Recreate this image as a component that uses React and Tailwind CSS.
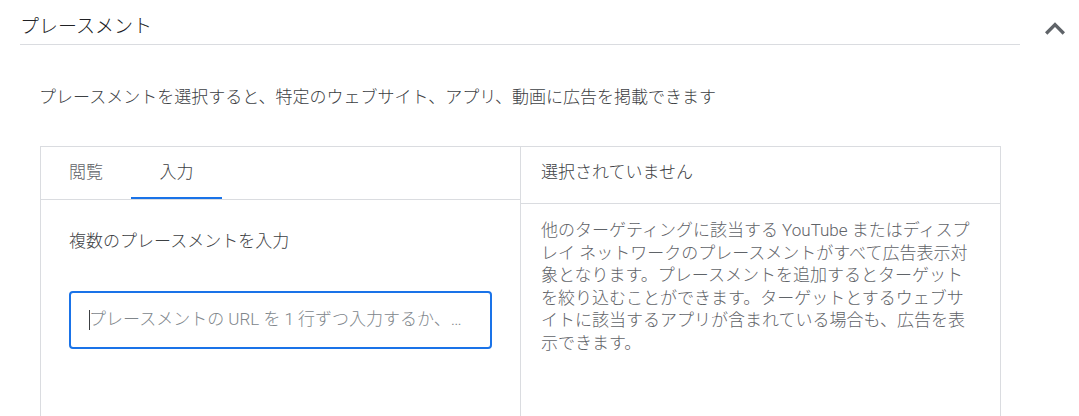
const font = { fontFamily: 'Roboto, "Noto Sans CJK JP", sans-serif' };

function ExpandLess() {
  return (
    <svg width="40" height="40" viewBox="0 0 24 24" className="block shrink-0 text-[#5f6368]">
      <path fill="currentColor" d="M12 8l-6 6 1.41 1.41L12 10.83l4.59 4.58L18 14z" />
    </svg>
  );
}

const helpLines = [
  '他のターゲティングに該当する YouTube またはディスプ',
  'レイ ネットワークのプレースメントがすべて広告表示対',
  '象となります。プレースメントを追加するとターゲット',
  'を絞り込むことができます。ターゲットとするウェブサ',
  'イトに該当するアプリが含まれている場合も、広告を表',
  '示できます。',
];

export default function App() {
  return (
    <div
      className="h-[416px] w-[1079px] overflow-hidden bg-white font-light text-[#3c4043]"
      style={font}
    >
      {/* section header */}
      <div className="flex h-[45px] items-start">
        <div className="ml-[20px] h-[45px] w-[1000px] border-b border-[#dadce0] pt-[13px] text-[19px] leading-[28px] text-[#202124]">
          プレースメント
        </div>
        <div className="ml-[15px] mt-[9px]">
          <ExpandLess />
        </div>
      </div>

      <p className="ml-[39px] mt-[40px] text-[17px] leading-[24px]">
        プレースメントを選択すると、特定のウェブサイト、アプリ、動画に広告を掲載できます
      </p>

      <div className="ml-[40px] mt-[37px] grid h-[280px] w-[961px] grid-cols-[480px_1fr] border border-b-0 border-[#dadce0]">
        {/* left: tabs + input */}
        <div className="border-r border-[#dadce0]">
          <div className="flex h-[53px] border-b border-[#dadce0] text-[17px]">
            <button className="flex w-[90px] items-center justify-center text-[#5f6368]">
              閲覧
            </button>
            <button className="flex w-[91px] items-center justify-center border-b-2 border-[#1a73e8] pt-[2px] text-[#3c4043]">
              入力
            </button>
          </div>
          <div className="pl-[28px] pt-[29px]">
            <p className="text-[17px] leading-[24px]">複数のプレースメントを入力</p>
            <div className="mt-[38px] flex h-[58px] w-[423px] items-center rounded-[4px] border-2 border-[#1a73e8] pl-[18px]">
              <span className="h-[20px] w-px bg-[#3c4043]" />
              <span className="-ml-px whitespace-nowrap text-[17px] text-[#80868b]">
                プレースメントの URL を 1 行ずつ入力するか、…
              </span>
            </div>
          </div>
        </div>

        {/* right: selection summary */}
        <div>
          <div className="h-[57px] border-b border-[#dadce0] pl-[20px] pt-[13px] text-[17px] leading-[24px]">
            選択されていません
          </div>
          <div className="pl-[20px] pt-[15px] text-[17px] leading-[22.5px] text-[#5f6368]">
            {helpLines.map((line) => (
              <div key={line} className="whitespace-nowrap">
                {line}
              </div>
            ))}
          </div>
        </div>
      </div>
    </div>
  );
}
